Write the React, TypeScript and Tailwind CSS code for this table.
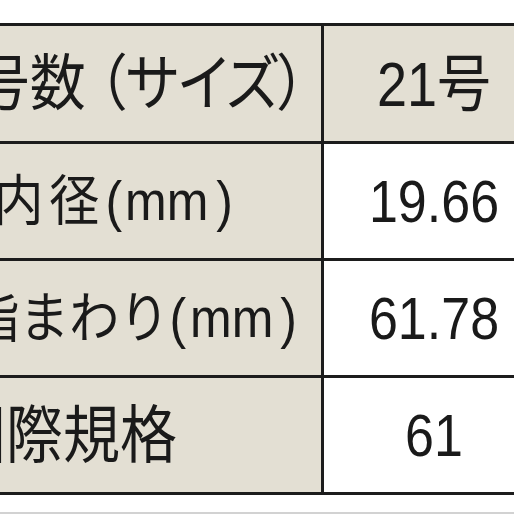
type Part = { t: string; c?: string };

const rows: { parts: Part[]; value: string; labelClass: string; head?: boolean }[] = [
  {
    parts: [{ t: "号数" }, { t: "（サイズ）", c: "ml-[12px]" }],
    value: "21号",
    labelClass: "text-[56px] pr-[15px] [font-feature-settings:'palt']",
    head: true,
  },
  {
    parts: [{ t: "内径", c: "tracking-[6px]" }, { t: "(" }, { t: "mm", c: "ml-[3px]" }, { t: ")", c: "ml-[8px]" }],
    value: "19.66",
    labelClass: "text-[50px] pr-[88px]",
  },
  {
    parts: [{ t: "指まわり" }, { t: "(" }, { t: "mm", c: "ml-[4px]" }, { t: ")", c: "ml-[7px]" }],
    value: "61.78",
    labelClass: "text-[50px] pr-[24px]",
  },
  {
    parts: [{ t: "国際規格" }],
    value: "61",
    labelClass: "text-[57px] pr-[144px]",
  },
];

const font = "font-['Liberation_Sans','Noto_Sans_CJK_JP',sans-serif]";

export default function App() {
  return (
    <div className="w-[514px] h-[514px] overflow-hidden bg-white">
      <div className="pt-[23px]">
        <div className="ml-[-79px] w-[623px] grid grid-cols-[400px_220px] grid-rows-[115px_114px_114px_114px] gap-[3px] bg-[#1c1c1c] border-y-[3px] border-[#1c1c1c]">
          {rows.map((r) => (
            <>
              <div
                key={r.value + "-l"}
                className={`bg-[#e3dfd3] flex items-center justify-end whitespace-nowrap text-[#1a1a1a] ${font} ${r.labelClass}`}
              >
                <span className="flex scale-y-[1.1] leading-none">
                  {r.parts.map((p, i) => (
                    <span key={i} className={p.c}>
                      {p.t}
                    </span>
                  ))}
                </span>
              </div>
              <div
                key={r.value + "-r"}
                className={`${r.head ? "bg-[#e3dfd3]" : "bg-white"} flex items-center justify-center whitespace-nowrap text-[#1a1a1a] ${font} ${r.head ? "text-[54px]" : "text-[52px]"}`}
              >
                <span className="inline-block scale-y-[1.15] leading-none">{r.value}</span>
              </div>
            </>
          ))}
        </div>
        <div className="h-[17px]" />
        <div className="h-[2px] bg-[#d2d2d2]" />
      </div>
    </div>
  );
}
